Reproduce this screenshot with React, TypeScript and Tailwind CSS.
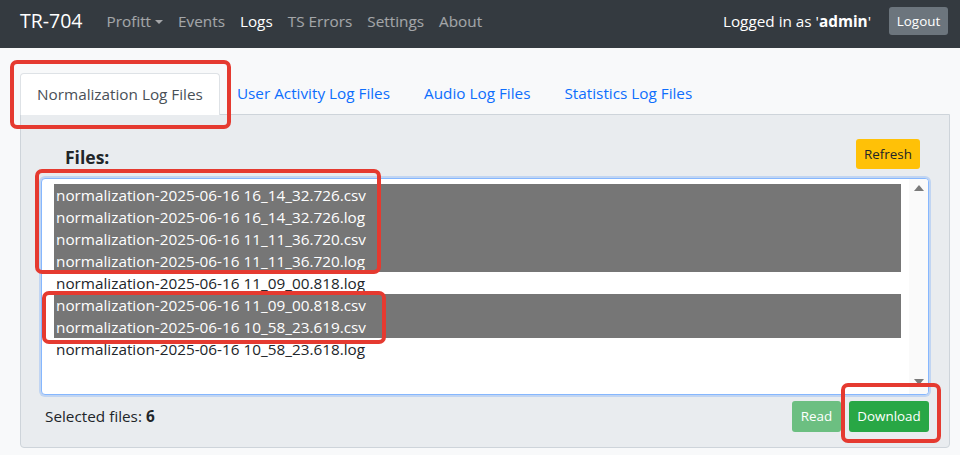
import React from "react";

const FILES = [
  { name: "normalization-2025-06-16 16_14_32.726.csv", selected: true },
  { name: "normalization-2025-06-16 16_14_32.726.log", selected: true },
  { name: "normalization-2025-06-16 11_11_36.720.csv", selected: true },
  { name: "normalization-2025-06-16 11_11_36.720.log", selected: true },
  { name: "normalization-2025-06-16 11_09_00.818.log", selected: false },
  { name: "normalization-2025-06-16 11_09_00.818.csv", selected: true },
  { name: "normalization-2025-06-16 10_58_23.619.csv", selected: true },
  { name: "normalization-2025-06-16 10_58_23.618.log", selected: false },
];

const NAV = ["Events", "Logs", "TS Errors", "Settings", "About"];
const TABS = ["User Activity Log Files", "Audio Log Files", "Statistics Log Files"];

export default function App() {
  const selectedCount = FILES.filter((f) => f.selected).length;

  return (
    <div
      className="relative h-[455px] w-[960px] overflow-hidden bg-[#f8f9fa] text-[#212529]"
      style={{ fontFamily: '"Open Sans", "Noto Sans", sans-serif' }}
    >
      <nav className="flex h-12 items-center bg-[#343a40] pb-[6px] pl-5 pr-3">
        <span className="text-[19.5px] text-white">TR-704</span>
        <ul className="ml-[24px] flex items-center gap-[15px] text-[15.3px] text-white/55">
          <li className="flex items-center gap-1">
            Profitt
            <span className="mt-[2px] border-x-[4px] border-t-[4px] border-x-transparent border-t-current" />
          </li>
          {NAV.map((item) => (
            <li key={item} className={item === "Logs" ? "text-white" : ""}>
              {item}
            </li>
          ))}
        </ul>
        <div className="ml-auto flex items-center">
          <span className="text-[15.3px] text-white">
            Logged in as '<b>admin</b>'
          </span>
          <button className="ml-[18px] h-[28px] w-[59px] rounded-[3px] bg-[#6c757d] text-[13.4px] text-white">
            Logout
          </button>
        </div>
      </nav>

      <div className="pl-5 pr-[10px] pt-6">
        <div className="flex items-end text-[15.3px]">
          <div className="relative z-10 -mb-px flex h-[42px] items-center rounded-t-[4px] border border-b-0 border-[#dee2e6] bg-white px-[16px] text-[#495057]">
            Normalization Log Files
          </div>
          {TABS.map((t) => (
            <div key={t} className="flex h-[42px] items-center px-[17px] text-[#0d6efd]">
              {t}
            </div>
          ))}
        </div>

        <section className="h-[334px] rounded-b-[4px] border border-[#ced4da] bg-[#e9ecef] px-5 pt-6">
          <div className="flex items-end justify-between">
            <h2 className="ml-6 text-[17.5px] font-bold leading-6">Files:</h2>
            <button className="mr-[9px] h-[30px] w-[64px] rounded-[3px] bg-[#ffc107] text-[13.4px] text-[#212529]">
              Refresh
            </button>
          </div>

          <div className="mt-[9px] flex h-[217px] overflow-hidden rounded-[4px] border border-[#86b7fe] bg-white shadow-[0_0_0_2px_rgba(13,110,253,0.18)]">
            <ul className="flex-1 pl-[12px] pr-[8px] pt-[5px] text-[15.3px] leading-[22px]">
              {FILES.map((f) => (
                <li
                  key={f.name}
                  className={`h-[22px] whitespace-nowrap pl-[2px] ${f.selected ? "bg-[#767676] text-white" : "text-[#212529]"}`}
                >
                  {f.name}
                </li>
              ))}
            </ul>
            <div className="flex w-[19px] flex-col items-center justify-between bg-[#fafafa] pb-[9px] pt-[6px]">
              <span className="border-x-[5px] border-b-[6px] border-x-transparent border-b-[#7a7a7a]" />
              <span className="border-x-[5px] border-t-[6px] border-x-transparent border-t-[#7a7a7a]" />
            </div>
          </div>

          <div className="mt-[6px] flex items-center justify-between">
            <span className="pl-1 text-[15.3px]">
              Selected files: <b>{selectedCount}</b>
            </span>
            <div className="flex gap-2">
              <button className="h-[31px] w-[49px] rounded-[3px] bg-[#6cbf81] text-[13.4px] text-white">
                Read
              </button>
              <button className="h-[31px] w-[80px] rounded-[3px] bg-[#28a745] text-[13.4px] text-white">
                Download
              </button>
            </div>
          </div>
        </section>
      </div>

      {/* annotation boxes */}
      <div className="pointer-events-none absolute left-[10px] top-[60px] h-[69px] w-[221px] rounded-[7px] border-[4px] border-[#e53a30]" />
      <div className="pointer-events-none absolute left-[35px] top-[169px] h-[105px] w-[346px] rounded-[7px] border-[4px] border-[#e53a30]" />
      <div className="pointer-events-none absolute left-[42px] top-[291px] h-[53px] w-[344px] rounded-[7px] border-[4px] border-[#e53a30]" />
      <div className="pointer-events-none absolute left-[841px] top-[383px] h-[60px] w-[100px] rounded-[7px] border-[4px] border-[#e53a30]" />
    </div>
  );
}
